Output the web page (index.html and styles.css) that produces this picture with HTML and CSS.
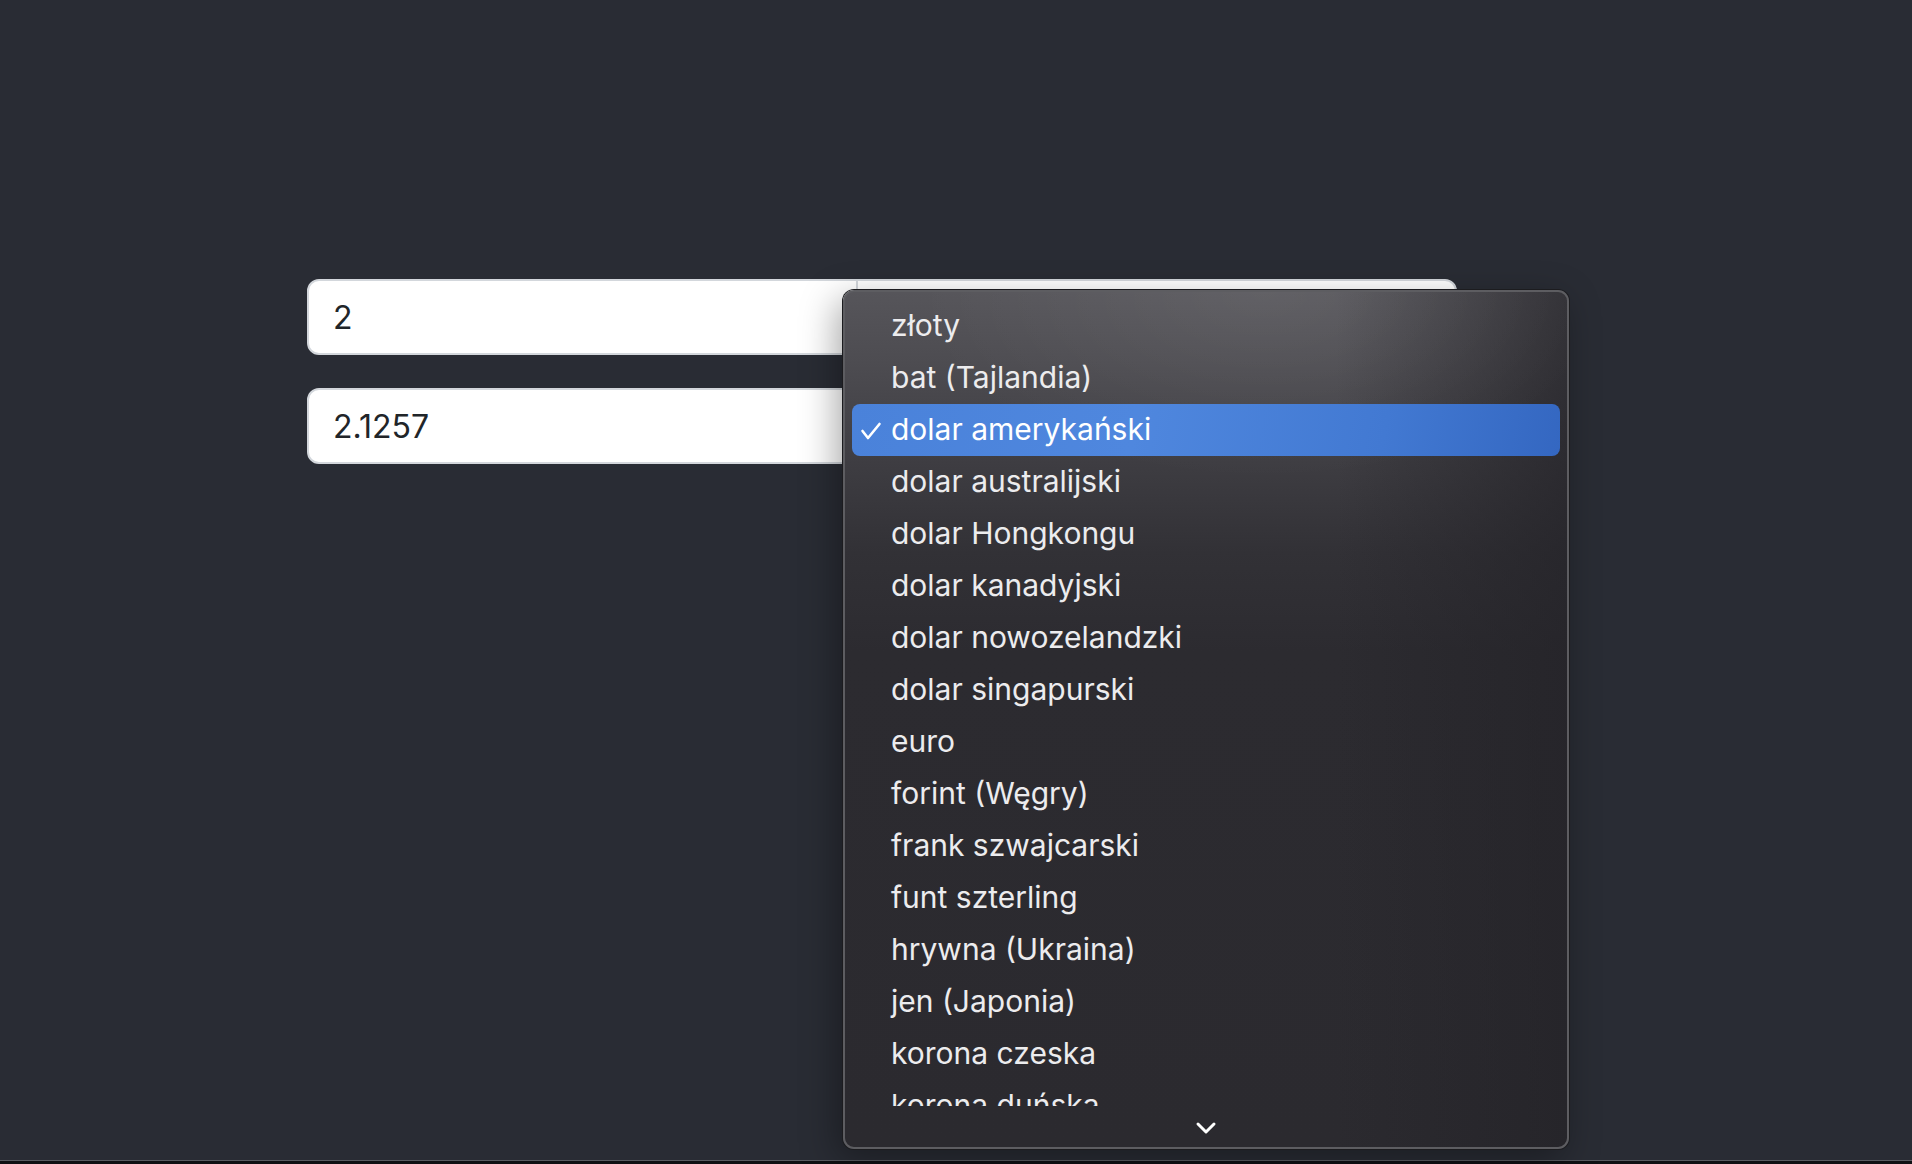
FILE: index.html
```html
<!DOCTYPE html>
<html lang="pl">
<head>
<meta charset="utf-8">
<title>Przelicznik walut</title>
<link rel="stylesheet" href="styles.css">
</head>
<body>
<div class="page">
  <main class="converter">
    <div class="row">
      <div class="field">2</div>
      <div class="select" aria-label="dolar amerykański"></div>
    </div>
    <div class="row">
      <div class="field">2.1257</div>
      <div class="select" aria-label="złoty"></div>
    </div>
  </main>

  <div class="menu" role="listbox">
    <ul class="options">
      <li class="option">złoty</li>
      <li class="option">bat (Tajlandia)</li>
      <li class="option selected"><span class="check"><svg width="22" height="18" viewBox="0 0 22 18"><polyline points="2.5,9 8,16 19.5,2" fill="none" stroke="#fff" stroke-width="2.6" stroke-linecap="round" stroke-linejoin="round"/></svg></span>dolar amerykański</li>
      <li class="option">dolar australijski</li>
      <li class="option">dolar Hongkongu</li>
      <li class="option">dolar kanadyjski</li>
      <li class="option">dolar nowozelandzki</li>
      <li class="option">dolar singapurski</li>
      <li class="option">euro</li>
      <li class="option">forint (Węgry)</li>
      <li class="option">frank szwajcarski</li>
      <li class="option">funt szterling</li>
      <li class="option">hrywna (Ukraina)</li>
      <li class="option">jen (Japonia)</li>
      <li class="option">korona czeska</li>
      <li class="option">korona duńska</li>
    </ul>
    <div class="scroll-down">
      <svg width="22" height="14" viewBox="0 0 22 14"><polyline points="3,3 11,11 19,3" fill="none" stroke="#fff" stroke-width="3" stroke-linecap="round" stroke-linejoin="round"/></svg>
    </div>
  </div>
</div>
<div class="bottom-bar"></div>
</body>
</html>
```

FILE: styles.css
```css
* { box-sizing: border-box; }

html, body {
  margin: 0;
  height: 100%;
}

body {
  background: #0f1013;
  font-family: Inter, "Noto Sans", "Liberation Sans", sans-serif;
  display: flex;
  flex-direction: column;
  overflow: hidden;
}

.page {
  position: relative;
  height: 1160px;
  flex: none;
  background: #292c34;
}

.bottom-bar {
  height: 1px;
  background: #5a5c62;
  flex: none;
}

.converter {
  padding-top: 279px;
  margin-left: 307px;
  width: 1150px;
  display: flex;
  flex-direction: column;
  gap: 33px;
}

.row {
  display: flex;
  height: 76px;
}

.field {
  width: 551px;
  background: #fff;
  border: 2px solid #d3d7dc;
  border-radius: 12px 0 0 12px;
  padding: 0 24px;
  display: flex;
  align-items: center;
  font-size: 32px;
  color: #212529;
}

.select {
  flex: 1;
  margin-left: -2px;
  background: #fff;
  border: 2px solid #d3d7dc;
  border-radius: 0 12px 12px 0;
}

.menu {
  position: absolute;
  left: 843px;
  top: 290px;
  width: 726px;
  height: 859px;
  border-radius: 11px;
  border: 2px solid #5d5d61;
  overflow: hidden;
  display: flex;
  flex-direction: column;
  box-shadow: 0 0 0 1px #1c1c1f, -6px 10px 36px rgba(0, 0, 0, 0.35);
  background:
    radial-gradient(ellipse 48% 22% at 58% 0%, rgba(255, 255, 255, 0.07), rgba(255, 255, 255, 0) 100%),
    linear-gradient(to right, rgba(36, 35, 40, 0) 0%, rgba(36, 35, 40, 0) 68%, rgba(36, 35, 40, 0.7) 100%),
    linear-gradient(to bottom, #56555a 0px, #4d4c51 70px, #3e3d42 170px, #323136 260px, #2c2b30 360px, #2b2a2f 100%);
}

.options {
  list-style: none;
  margin: 0;
  padding: 8px 7px 0;
  height: 814px;
  overflow: hidden;
  flex: none;
}

.option {
  height: 52px;
  display: flex;
  align-items: center;
  padding-left: 39px;
  padding-bottom: 2px;
  font-size: 30px;
  color: #ececee;
  white-space: nowrap;
  border-radius: 8px;
  position: relative;
}

.option.selected {
  color: #fff;
  background: linear-gradient(100deg, #4a82da 0%, #4f87de 40%, #4279d2 75%, #3467c1 100%);
}

.check {
  position: absolute;
  left: 8px;
  top: 18px;
  display: flex;
}

.scroll-down {
  flex: 1;
  display: flex;
  justify-content: center;
  padding-top: 15px;
}
```
